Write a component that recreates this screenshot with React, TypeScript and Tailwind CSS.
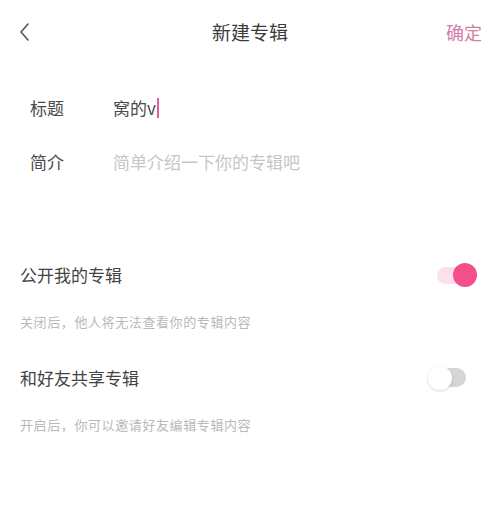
import React from 'react';

const font = { fontFamily: '"Noto Sans CJK SC", "Noto Sans", sans-serif' };

const ToggleOn: React.FC = () => (
  <div className="relative h-[24px] w-[40px]">
    <div className="absolute left-0 top-[4px] h-[17px] w-[30px] rounded-full bg-[#fbe1ec]" />
    <div className="absolute right-0 top-0 h-[24px] w-[24px] rounded-full bg-[#f24f8b]" />
  </div>
);

const ToggleOff: React.FC = () => (
  <div className="relative h-[24px] w-[38px]">
    <div className="absolute right-0 top-[2px] h-[19px] w-[28px] rounded-full bg-[#d6d6d6]" />
    <div className="absolute left-0 top-0 h-[24px] w-[24px] rounded-full bg-white shadow-[0_1px_3px_rgba(0,0,0,0.16)]" />
  </div>
);

export default function App() {
  return (
    <div className="h-[512px] w-[500px] bg-white text-[#3a3a3a]" style={font}>
      <header className="grid h-[64px] grid-cols-3 items-center px-[18px]">
        <svg width="14" height="20" viewBox="0 0 14 20" fill="none">
          <path d="M10 2 L3 10 L10 18" stroke="#555" strokeWidth="1.6" strokeLinecap="round" strokeLinejoin="round" />
        </svg>
        <h1 className="text-center text-[19px] text-[#3c3c3c]">新建专辑</h1>
        <button className="justify-self-end text-[18px] text-[#d57ea4]">确定</button>
      </header>

      <div className="mt-[17px] px-[30px]">
        <div className="flex h-[54px] items-center">
          <span className="w-[83px] text-[17px] text-[#4a4a4a]">标题</span>
          <span className="flex items-center text-[17px] text-[#4a4a4a]">
            窝的v
            <span className="ml-[1px] inline-block h-[20px] w-[2px] bg-[#e0609a]" />
          </span>
        </div>
        <div className="flex h-[54px] items-center">
          <span className="w-[83px] text-[17px] text-[#4a4a4a]">简介</span>
          <span className="text-[17px] text-[#c6c6c6]">简单介绍一下你的专辑吧</span>
        </div>
      </div>

      <div className="mt-[70px] pl-[20px]">
        <div className="flex h-[32px] items-center justify-between pr-[23px]">
          <span className="text-[17px] text-[#444]">公开我的专辑</span>
          <ToggleOn />
        </div>
        <p className="mt-[21px] text-[13px] tracking-[0.6px] text-[#b9b9b9]">关闭后，他人将无法查看你的专辑内容</p>
        <div className="mt-[30px] flex h-[32px] items-center justify-between pr-[34px]">
          <span className="text-[17px] text-[#444]">和好友共享专辑</span>
          <ToggleOff />
        </div>
        <p className="mt-[21px] text-[13px] tracking-[0.6px] text-[#b9b9b9]">开启后，你可以邀请好友编辑专辑内容</p>
      </div>
    </div>
  );
}
